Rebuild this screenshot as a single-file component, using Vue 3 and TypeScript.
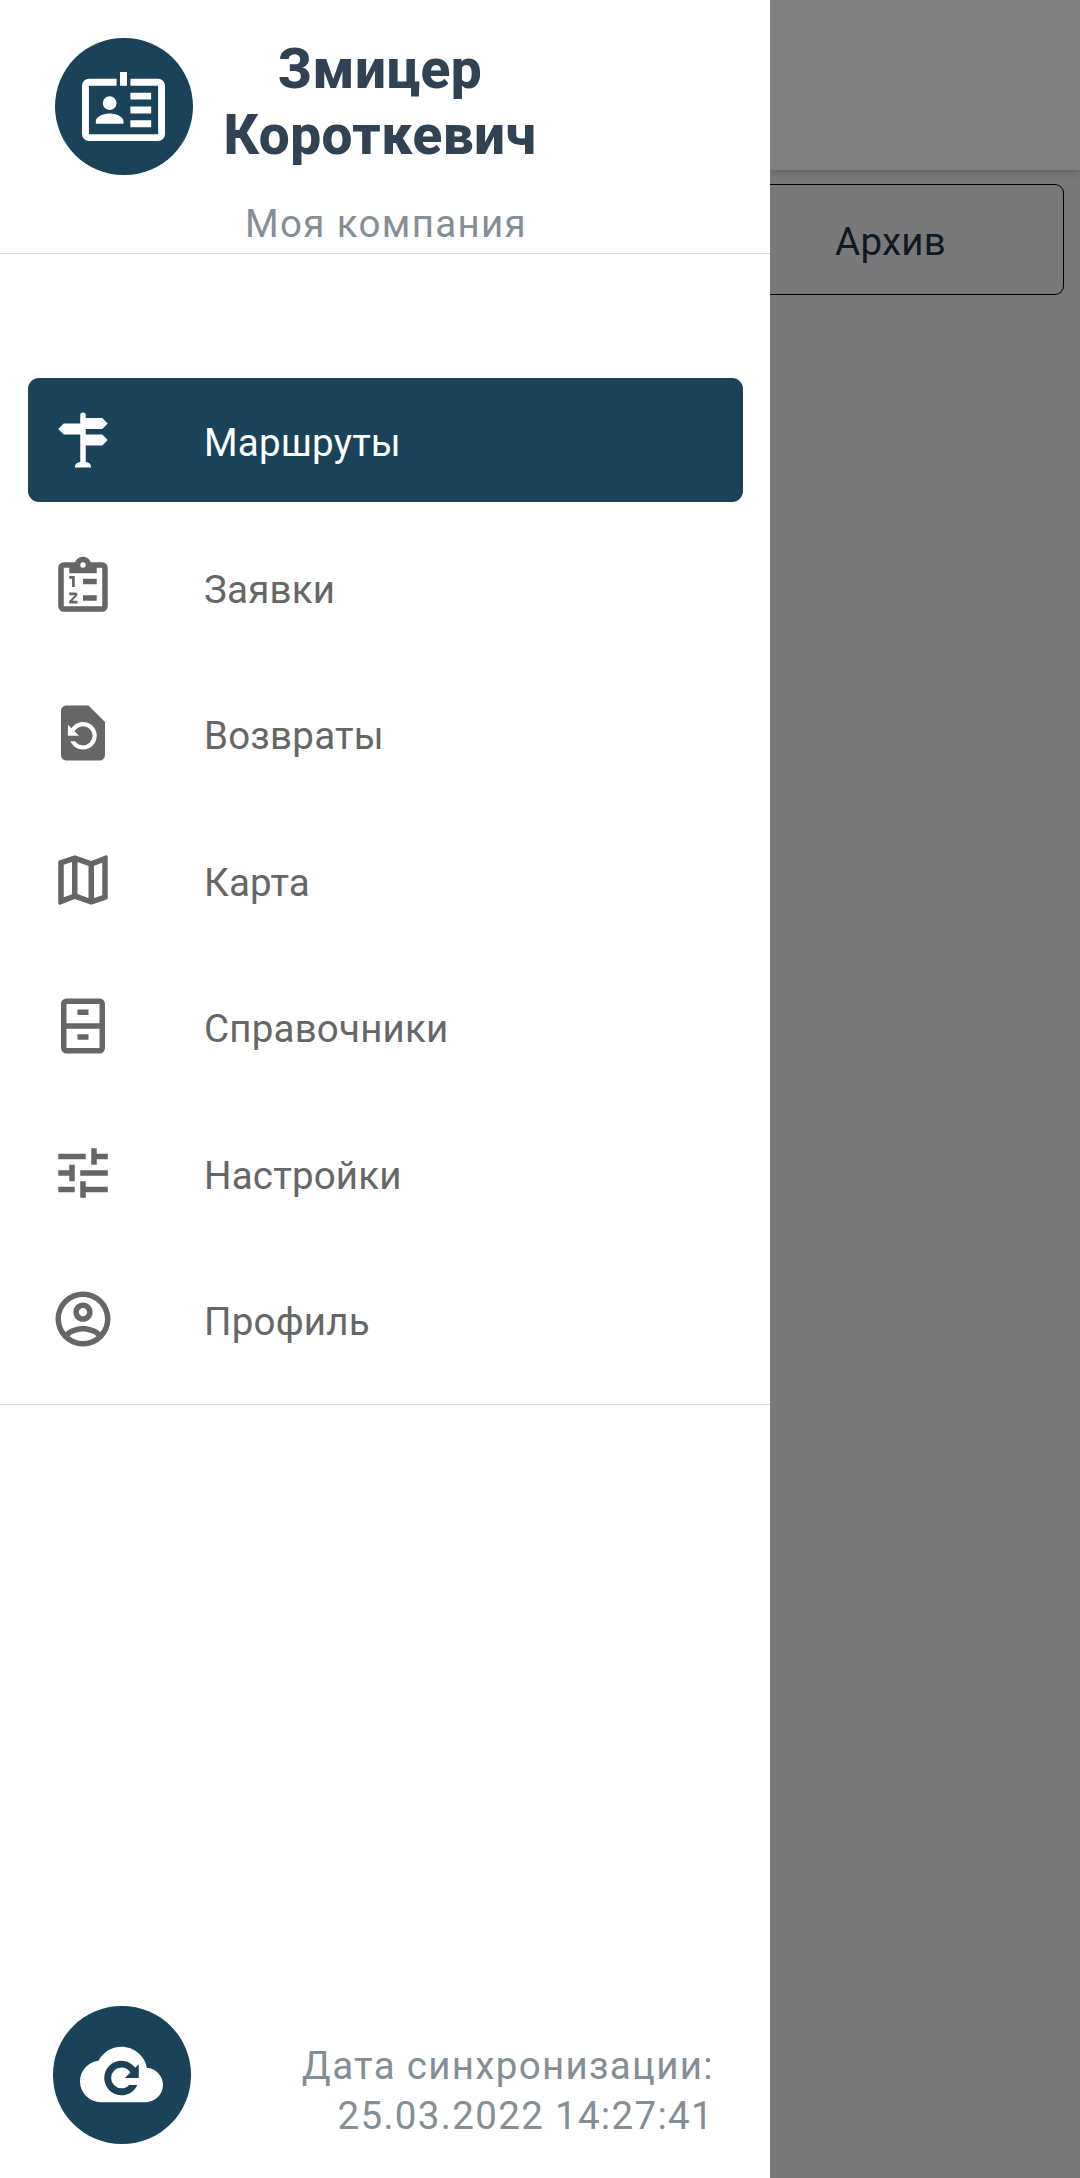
<script setup lang="ts">
interface MenuItem {
  label: string
  icon: string
  active?: boolean
}

const items: MenuItem[] = [
  {
    label: 'Маршруты',
    active: true,
    icon: 'M11,3A1,1 0 0,1 13,3V4H19L21,6L19,8H13V10H19L21,12L19,14H13V20A2,2 0 0,1 15,22H9A2,2 0 0,1 11,20V10H5L3,8L5,6H11V3Z',
  },
  {
    label: 'Заявки',
    icon: 'M19,3H14.82C14.4,1.84 13.3,1 12,1C10.7,1 9.6,1.84 9.18,3H5A2,2 0 0,0 3,5V19A2,2 0 0,0 5,21H19A2,2 0 0,0 21,19V5A2,2 0 0,0 19,3M12,3A1,1 0 0,1 13,4A1,1 0 0,1 12,5A1,1 0 0,1 11,4A1,1 0 0,1 12,3M7,7H17V5H19V19H5V5H7V7M17,11H12V9H17V11M17,17H12V15H17V17M8,12V9H7V8H9V12H8M9.25,14A0.75,0.75 0 0,1 10,14.75C10,14.95 9.92,15.14 9.79,15.27L8.12,17H10V18H7V17.08L9,15H7V14H9.25Z',
  },
  {
    label: 'Возвраты',
    icon: 'M14,2H6C4.89,2 4,2.9 4,4V20C4,21.1 4.89,22 6,22H18A2,2 0 0,0 20,20V8L14,2M12,18C9.95,18 8.19,16.76 7.42,15H9.13C9.76,15.9 10.81,16.5 12,16.5A3.5,3.5 0 0,0 15.5,13A3.5,3.5 0 0,0 12,9.5C10.65,9.5 9.5,10.28 8.9,11.4L10.5,13H6.5V9L7.8,10.3C8.69,8.92 10.23,8 12,8A5,5 0 0,1 17,13A5,5 0 0,1 12,18Z',
  },
  {
    label: 'Карта',
    icon: 'M20.5,3L20.34,3.03L15,5.1L9,3L3.36,4.9C3.15,4.97 3,5.15 3,5.38V20.5A0.5,0.5 0 0,0 3.5,21L3.66,20.97L9,18.9L15,21L20.64,19.1C20.85,19.03 21,18.85 21,18.62V3.5A0.5,0.5 0 0,0 20.5,3M10,5.47L14,6.87V18.53L10,17.13V5.47M5,6.46L8,5.45V17.15L5,18.31V6.46M19,17.54L16,18.55V6.86L19,5.7V17.54Z',
  },
  {
    label: 'Справочники',
    icon: 'M6,2H18A2,2 0 0,1 20,4V20A2,2 0 0,1 18,22H6A2,2 0 0,1 4,20V4A2,2 0 0,1 6,2M6,4V11H18V4H6M6,13V20H18V13H6M10,6H14V8H10V6M10,15H14V17H10V15Z',
  },
  {
    label: 'Настройки',
    icon: 'M3,17V19H9V17H3M3,5V7H13V5H3M13,21V19H21V17H13V15H11V21H13M7,9V11H3V13H7V15H9V9H7M21,13V11H11V13H21M15,9H17V7H21V5H17V3H15V9Z',
  },
  {
    label: 'Профиль',
    icon: 'M12,2A10,10 0 0,0 2,12A10,10 0 0,0 12,22A10,10 0 0,0 22,12A10,10 0 0,0 12,2M7.07,18.28C7.5,17.38 10.12,16.5 12,16.5C13.88,16.5 16.5,17.38 16.93,18.28C15.57,19.36 13.86,20 12,20C10.14,20 8.43,19.36 7.07,18.28M18.36,16.83C16.93,15.09 13.46,14.5 12,14.5C10.54,14.5 7.07,15.09 5.64,16.83C4.62,15.5 4,13.82 4,12C4,7.59 7.59,4 12,4C16.41,4 20,7.59 20,12C20,13.82 19.38,15.5 18.36,16.83M12,6C10.06,6 8.5,7.56 8.5,9.5C8.5,11.44 10.06,13 12,13C13.94,13 15.5,11.44 15.5,9.5C15.5,7.56 13.94,6 12,6M12,11A1.5,1.5 0 0,1 10.5,9.5A1.5,1.5 0 0,1 12,8A1.5,1.5 0 0,1 13.5,9.5A1.5,1.5 0 0,1 12,11Z',
  },
]
</script>

<template>
  <div class="screen">
    <aside class="drawer">
      <header class="head">
        <div class="disc">
          <svg viewBox="0 0 24 24" class="disc-icon">
            <path
              fill-rule="evenodd"
              d="M2,4H10V6H2V20H22V6H14V4H22A2,2 0 0,1 24,6V20A2,2 0 0,1 22,22H2A2,2 0 0,1 0,20V6A2,2 0 0,1 2,4M11,2H13V6H11V2M14,8H20V10H14V8M14,12H20V14H14V12M14,16H20V18H14V16M8,9A2,2 0 0,1 8,13A2,2 0 0,1 8,9M12,17V16.25C12,14.66 9.33,14 8,14C6.67,14 4,14.66 4,16.25V17H12Z"
            />
          </svg>
        </div>
        <div class="who">
          <h1 class="name">Змицер Короткевич</h1>
        </div>
      </header>
      <p class="company">Моя компания</p>

      <nav class="menu">
        <a v-for="item in items" :key="item.label" class="item" :class="{ active: item.active }">
          <svg viewBox="0 0 24 24" class="item-icon">
            <path fill-rule="evenodd" :d="item.icon" />
          </svg>
          <span class="label">{{ item.label }}</span>
        </a>
      </nav>

      <footer class="foot">
        <div class="disc">
          <svg viewBox="0 0 24 24" class="disc-icon">
            <path
              fill-rule="evenodd"
              d="M19.35,10.03C18.67,6.59 15.64,4 12,4C9.11,4 6.6,5.64 5.35,8.04C2.34,8.36 0,10.9 0,14A6,6 0 0,0 6,20H19A5,5 0 0,0 24,15C24,12.36 21.95,10.22 19.35,10.03M12,8A5,5 0 0,0 7,13A5,5 0 0,0 12,18C14.05,18 15.81,16.77 16.58,15H14.23A3,3 0 0,1 12,16A3,3 0 0,1 9,13A3,3 0 0,1 12,10C13.06,10 13.96,10.5 14.56,11.44L13,13H17V9L15.95,10.05C15.04,8.81 13.62,8 12,8Z"
            />
          </svg>
        </div>
        <p class="sync">Дата синхронизации:<br />25.03.2022 14:27:41</p>
      </footer>
    </aside>

    <main class="backdrop">
      <div class="appbar"></div>
      <div class="tab"><span>Архив</span></div>
    </main>
  </div>
</template>

<style>
body {
  margin: 0;
}
</style>

<style scoped>
.screen {
  display: flex;
  width: 1080px;
  height: 2178px;
  overflow: hidden;
  font-family: Roboto, 'Liberation Sans', sans-serif;
  font-size: 38.5px;
}
.drawer {
  display: flex;
  flex-direction: column;
  flex: none;
  width: 770px;
  background: #fff;
}
.head {
  display: flex;
  box-sizing: border-box;
  height: 193px;
  padding: 37.5px 0 0 55px;
}
.disc {
  display: flex;
  align-items: center;
  justify-content: center;
  flex: none;
  width: 137.5px;
  height: 137.5px;
  border-radius: 50%;
  background: #1a4259;
}
.disc-icon {
  width: 83px;
  height: 83px;
  fill: #fff;
}
.who {
  width: 320px;
  margin: -2px 0 0 27.5px;
}
.name {
  margin: 0;
  font-size: 55px;
  font-weight: 800;
  line-height: 66.4px;
  letter-spacing: 0.45px;
  text-align: center;
  color: #304354;
}
.company {
  box-sizing: border-box;
  height: 61px;
  margin: 0;
  padding-left: 245px;
  border-bottom: 1px solid #dcdcdc;
  line-height: 62px;
  letter-spacing: 1.35px;
  color: #848e96;
}
.menu {
  display: flex;
  flex-direction: column;
  gap: 22px;
  box-sizing: border-box;
  height: 1151px;
  padding: 124px 27px 0 28px;
  border-bottom: 1px solid #dcdcdc;
}
.item {
  display: flex;
  align-items: center;
  flex: none;
  box-sizing: border-box;
  height: 124.5px;
  padding-left: 22px;
  border-radius: 11px;
  color: #666;
}
.item.active {
  height: 124px;
  margin-bottom: 0.5px;
  background: #1a4259;
  color: #fff;
}
.item-icon {
  width: 66px;
  height: 66px;
  fill: currentColor;
}
.label {
  margin-left: 88px;
  padding-top: 6px;
  line-height: 52px;
  letter-spacing: 0.2px;
}
.foot {
  display: flex;
  justify-content: space-between;
  margin-top: auto;
  padding: 0 56px 34.5px 53px;
}
.sync {
  margin: 35px 0 0;
  line-height: 50px;
  letter-spacing: 1.32px;
  text-align: right;
  color: #848e96;
}
.backdrop {
  flex: 1;
  overflow: hidden;
  background: #797979;
}
.appbar {
  height: 170px;
  background: #808080;
  box-shadow: 0 2px 8px rgba(0, 0, 0, 0.22);
}
.tab {
  display: flex;
  align-items: center;
  justify-content: center;
  box-sizing: border-box;
  width: 294px;
  height: 111px;
  margin-top: 14px;
  padding: 3px 52px 0 0;
  border: 1.5px solid #000;
  border-left: 0;
  border-radius: 0 9px 9px 0;
  letter-spacing: 0.2px;
  color: #0e1a24;
}
</style>
